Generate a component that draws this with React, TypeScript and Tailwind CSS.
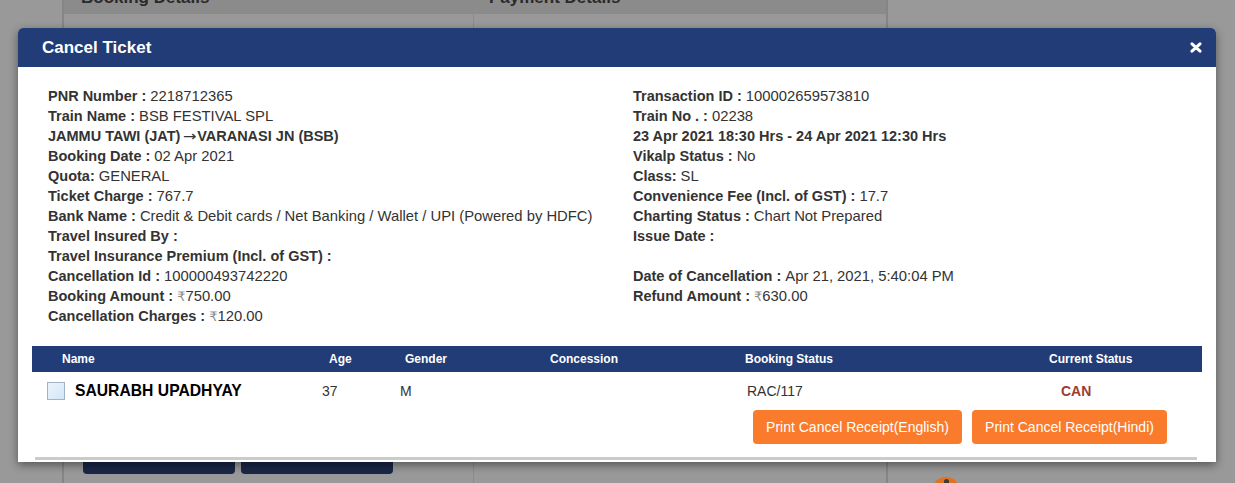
import React from "react";

type Item = { label: React.ReactNode; value?: React.ReactNode };

const Rupee = () => <span className="text-[#8a8a8a] font-['DejaVu_Sans',sans-serif] text-[13px]">₹</span>;

const left: Item[] = [
  { label: "PNR Number : ", value: "2218712365" },
  { label: "Train Name : ", value: "BSB FESTIVAL SPL" },
  {
    label: (
      <>
        JAMMU TAWI (JAT){" "}
        <span className="font-['DejaVu_Sans',sans-serif] font-normal text-[14px] inline-block scale-x-[1.15] mr-[1px]">→</span>
        VARANASI JN (BSB)
      </>
    ),
  },
  { label: "Booking Date : ", value: "02 Apr 2021" },
  { label: "Quota: ", value: "GENERAL" },
  { label: "Ticket Charge : ", value: "767.7" },
  { label: "Bank Name : ", value: "Credit & Debit cards / Net Banking / Wallet / UPI (Powered by HDFC)" },
  { label: "Travel Insured By : " },
  { label: "Travel Insurance Premium (Incl. of GST) : " },
  { label: "Cancellation Id : ", value: "100000493742220" },
  { label: "Booking Amount : ", value: <><Rupee />750.00</> },
  { label: "Cancellation Charges : ", value: <><Rupee />120.00</> },
];

const right: Item[] = [
  { label: "Transaction ID : ", value: "100002659573810" },
  { label: "Train No . : ", value: "02238" },
  { label: "23 Apr 2021 18:30 Hrs - 24 Apr 2021 12:30 Hrs" },
  { label: "Vikalp Status : ", value: "No" },
  { label: "Class: ", value: "SL" },
  { label: "Convenience Fee (Incl. of GST) : ", value: "17.7" },
  { label: "Charting Status : ", value: "Chart Not Prepared" },
  { label: "Issue Date : " },
  { label: "" },
  { label: "Date of Cancellation : ", value: "Apr 21, 2021, 5:40:04 PM" },
  { label: "Refund Amount : ", value: <><Rupee />630.00</> },
];

function Line({ item }: { item: Item }) {
  return (
    <div className="h-[20px] leading-[20px] whitespace-nowrap text-[#333]">
      <span className="font-bold text-[14.5px]">{item.label}</span>
      {item.value !== undefined && <span className="text-[14.8px]">{item.value}</span>}
    </div>
  );
}

export default function App() {
  return (
    <div className="relative w-[1235px] h-[483px] overflow-hidden bg-[#999999] font-['Liberation_Sans',Arial,sans-serif]">
      {/* background page */}
      <div className="flex">
        <div className="ml-[62px] w-[826px] h-[520px] -mt-[24px] border-x-2 border-[#858585] flex">
          <div className="w-[410px] border-r border-[#8a8a8a] flex flex-col">
            <div className="h-[38px] bg-[#8b8b8b] pl-[17px] pt-[12px] text-[17px] font-bold text-[#2a2a2a] leading-[20px]">
              Booking Details
            </div>
            <div className="h-[426px]" />
            <div className="flex gap-[6px] pl-[19px]">
              <div className="w-[152px] h-[34px] rounded-[4px] bg-[#1a2747]" />
              <div className="w-[152px] h-[34px] rounded-[4px] bg-[#1a2747]" />
            </div>
          </div>
          <div className="flex-1 flex flex-col">
            <div className="h-[38px] bg-[#8b8b8b] pl-[15px] pt-[12px] text-[17px] font-bold text-[#2a2a2a] leading-[20px]">
              Payment Details
            </div>
          </div>
        </div>
        <div className="flex-1 flex flex-col">
          <div className="h-[477px]" />
          <div className="ml-[44px] w-[28px] h-[28px] rounded-full bg-[#e2721f] flex justify-center pt-[2px]">
            <div className="w-[5px] h-[6px] rounded-t-full bg-[#3a3a3a]" />
          </div>
        </div>
      </div>

      {/* modal */}
      <div className="absolute left-[18px] top-[28px] w-[1198px] h-[434px] bg-white rounded-t-[5px] overflow-hidden shadow-[0_3px_10px_rgba(0,0,0,0.45)]">
        <div className="h-[39px] bg-[#213c77] flex items-center justify-between pl-[24px] pr-[14px]">
          <span className="text-white font-bold text-[17px]">Cancel Ticket</span>
          <svg width="12" height="11" viewBox="0 0 12 11">
            <path d="M2 1.8 L10 9.2 M10 1.8 L2 9.2" stroke="white" strokeWidth="3" strokeLinecap="round" />
          </svg>
        </div>

        <div className="pt-[19px] px-[14px]">
          <div className="grid grid-cols-[585px_1fr]">
            <div className="pl-[16px]">
              {left.map((it, i) => (
                <Line key={i} item={it} />
              ))}
            </div>
            <div className="pl-[16px]">
              {right.map((it, i) => (
                <Line key={i} item={it} />
              ))}
            </div>
          </div>

          <div className="mt-[20px] w-[1170px]">
            <div className="h-[26px] bg-[#213c77] text-white text-[12px] font-bold grid grid-cols-[267px_76px_145px_195px_304px_1fr] items-center pl-[30px]">
              <span>Name</span>
              <span>Age</span>
              <span>Gender</span>
              <span>Concession</span>
              <span>Booking Status</span>
              <span>Current Status</span>
            </div>
            <div className="h-[38px] grid grid-cols-[275px_78px_347px_314px_1fr] items-center pl-[15px] text-[14px] text-[#333]">
              <div className="flex items-center gap-[10px]">
                <span className="w-[18px] h-[18px] border border-[#a3b3c4] bg-gradient-to-br from-[#eaf3fc] to-[#d5e6f7]" />
                <span className="font-bold text-[15.7px] text-black">SAURABH UPADHYAY</span>
              </div>
              <span>37</span>
              <span>M</span>
              <span>RAC/117</span>
              <span className="font-bold text-[#a03a35]">CAN</span>
            </div>
            <div className="h-[34px] flex justify-end gap-[10px] pr-[35px]">
              <button className="w-[209px] h-[34px] rounded-[4px] bg-[#fa7b2c] text-white text-[14px] flex items-center justify-center">
                Print Cancel Receipt(English)
              </button>
              <button className="w-[195px] h-[34px] rounded-[4px] bg-[#fa7b2c] text-white text-[14px] flex items-center justify-center">
                Print Cancel Receipt(Hindi)
              </button>
            </div>
            <div className="mt-[13px] ml-[3px] w-[1162px] h-[3px] bg-[#cbcbcb]" />
          </div>
        </div>
      </div>
    </div>
  );
}
